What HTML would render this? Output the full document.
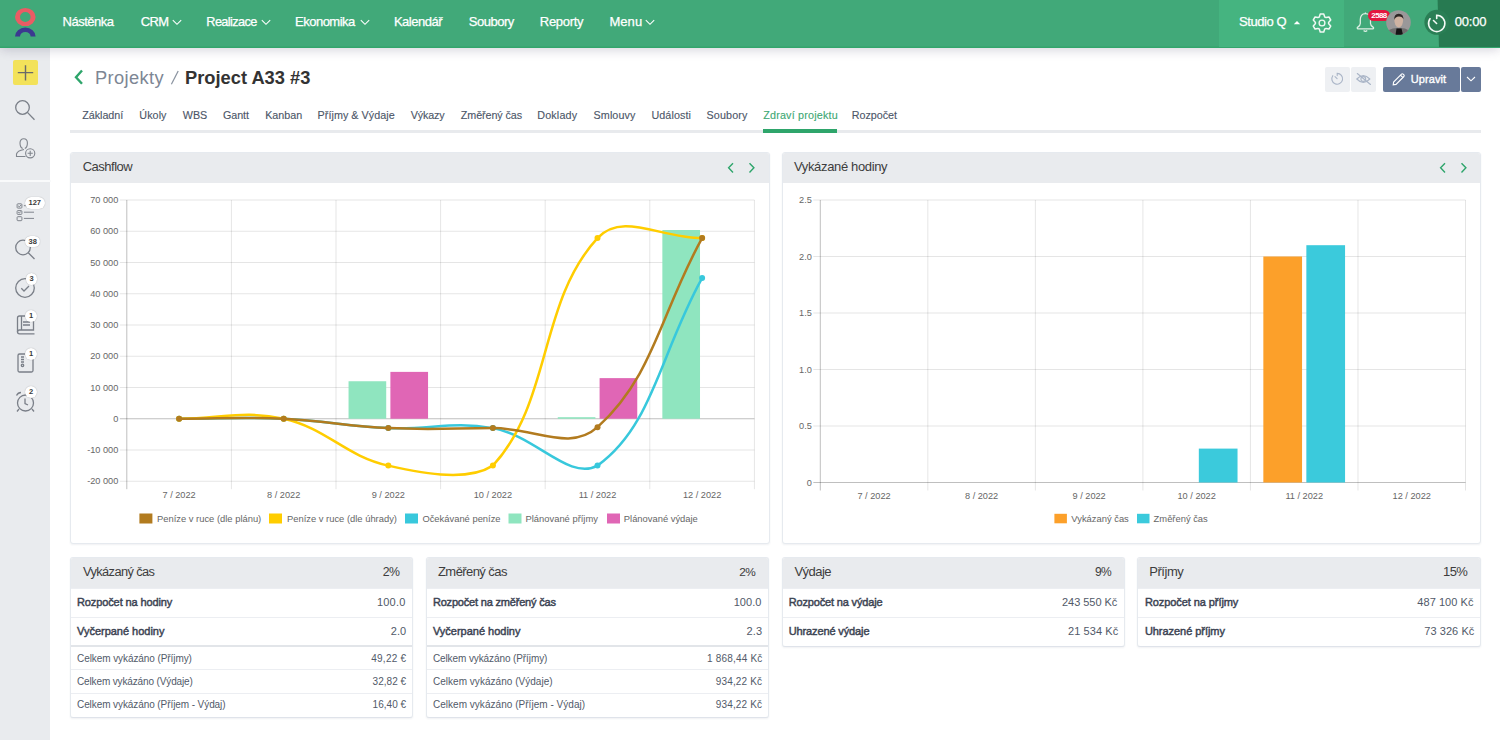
<!DOCTYPE html>
<html><head><meta charset="utf-8">
<style>
*{box-sizing:border-box;margin:0;padding:0}
html,body{width:1500px;height:740px;overflow:hidden;background:#fff;font-family:"Liberation Sans",sans-serif;position:relative}
.abs{position:absolute;white-space:nowrap}
.tx{position:absolute;white-space:nowrap;z-index:10}
#top{position:absolute;left:0;top:0;width:1500px;height:47.6px;background:#41a979;box-shadow:inset 0 -1.5px 0 rgba(30,160,90,0.4),0 2px 10px rgba(70,60,100,0.22);z-index:5}
.nav{position:absolute;top:14px;color:#fff;font-size:13px;line-height:16px;white-space:nowrap}
.chev{position:absolute;top:19px}
#side{position:absolute;left:0;top:47px;width:50.2px;height:693px;background:#e9ebee}
.sico{position:absolute}
.badge{position:absolute;background:#fff;border-radius:7px;font-size:7.5px;font-weight:bold;line-height:11px;height:11.5px;color:#3a3a3a;text-align:center;box-shadow:0 0 1px rgba(0,0,0,0.35)}
.crumb{position:absolute;top:66px;font-size:19px;line-height:24px;white-space:nowrap}
.tab{position:absolute;top:107px;font-size:11px;line-height:14px;color:#4c5668;white-space:nowrap}
.card{position:absolute;border:1px solid #e6eaef;border-radius:3px;background:#fff;overflow:hidden;box-shadow:0 1px 2px rgba(40,50,80,0.07)}
.chd{position:absolute;left:0;top:0;right:0;height:30px;background:#e9ebee}
.chd span{position:absolute;top:8px;font-size:13px;line-height:16px;color:#3d3d3d;white-space:nowrap}
svg text.ax{font-family:"Liberation Sans",sans-serif;font-size:9.2px;fill:#666}
svg text.lg{font-family:"Liberation Sans",sans-serif;font-size:9.4px;fill:#666}
.tbl{position:absolute;border:1px solid #e6eaef;border-bottom-color:#dfe3ea;border-radius:3px;background:#fff;overflow:hidden;box-shadow:0 1px 2px rgba(40,50,80,0.07)}
.tbl .hd{position:absolute;left:0;right:0;top:0;height:30px;background:#e9ebee}
.tbl .hd .l{position:absolute;left:12px;top:8px;font-size:13px;line-height:16px;color:#3d3d3d;white-space:nowrap}
.tbl .hd .r{position:absolute;right:12px;top:8px;font-size:13px;line-height:16px;color:#3d3d3d;white-space:nowrap}
.row{position:absolute;left:0;right:0;border-top:1px solid #eceef2}
.row .l{position:absolute;left:6px;white-space:nowrap}
.row .r{position:absolute;right:6px;white-space:nowrap}
.big .l{font-weight:bold;font-size:11px;color:#3b4352;top:7px;line-height:14px}
.big .r{font-size:11px;color:#555c68;top:7px;line-height:14px}
.sm .l,.sm .r{font-size:10px;color:#5b6270;top:5px;line-height:13px}
</style></head><body>

<div id="top">
  <svg class="abs" style="left:0;top:0" width="60" height="47" viewBox="0 0 60 47">
    <path fill="#ea5c64" fill-rule="evenodd" d="M15 17 a10.3 9.1 0 1 0 20.6 0 a10.3 9.1 0 1 0 -20.6 0 Z M20 17 a5.3 4.9 0 1 0 10.6 0 a5.3 4.9 0 1 0 -10.6 0 Z"/>
    <path fill="#3b3990" d="M15 36.5 A10.3 8.9 0 0 1 35.6 36.5 L30.6 36.5 A5.3 4.5 0 0 0 20 36.5 Z"/>
  </svg>
  <svg class="chev" style="left:172px" width="10" height="7" viewBox="0 0 10 7"><path d="M0.8 1.2 L5 5.3 L9.2 1.2" fill="none" stroke="#fff" stroke-width="1.1"/></svg>
  <svg class="chev" style="left:261px" width="10" height="7" viewBox="0 0 10 7"><path d="M0.8 1.2 L5 5.3 L9.2 1.2" fill="none" stroke="#fff" stroke-width="1.1"/></svg>
  <svg class="chev" style="left:360px" width="10" height="7" viewBox="0 0 10 7"><path d="M0.8 1.2 L5 5.3 L9.2 1.2" fill="none" stroke="#fff" stroke-width="1.1"/></svg>
  <svg class="chev" style="left:645px" width="10" height="7" viewBox="0 0 10 7"><path d="M0.8 1.2 L5 5.3 L9.2 1.2" fill="none" stroke="#fff" stroke-width="1.1"/></svg>

  <div class="abs" style="left:1219px;top:0;width:125px;height:47px;background:#45b480"></div>
  <svg class="abs" style="left:1293px;top:20px" width="8" height="5" viewBox="0 0 8 5"><path d="M0.8 4.2 L4 1 L7.2 4.2 Z" fill="#fff"/></svg>
  <svg class="abs" style="left:1310px;top:10.5px" width="24" height="24" viewBox="0 0 24 24"><path fill="none" stroke="#f0f8f3" stroke-width="1.5" stroke-linejoin="round" d="M9.34 5.74 L10.24 2.97 L13.76 2.97 L14.66 5.74 L15.25 6.37 L16.09 6.57 L18.94 5.96 L20.70 9.00 L18.75 11.17 L18.50 12.00 L18.75 12.83 L20.70 15.00 L18.94 18.04 L16.09 17.43 L15.25 17.63 L14.66 18.26 L13.76 21.03 L10.24 21.03 L9.34 18.26 L8.75 17.63 L7.91 17.43 L5.06 18.04 L3.30 15.00 L5.25 12.83 L5.50 12.00 L5.25 11.17 L3.30 9.00 L5.06 5.96 L7.91 6.57 L8.75 6.37 Z"/><circle cx="12" cy="12" r="2.9" fill="none" stroke="#f0f8f3" stroke-width="1.35"/></svg>

  <svg class="abs" style="left:1355px;top:10.5px" width="21" height="24" viewBox="0 0 21 24"><path d="M10.4 2.6 C6.9 2.6 5.3 5.2 5.3 8.6 L5.3 12.6 C5.3 14.1 4.4 15.1 2.8 16.1 Q1.9 16.7 2.3 17.3 Q2.7 17.9 3.7 17.9 L17.1 17.9 Q18.1 17.9 18.5 17.3 Q18.9 16.7 18 16.1 C16.4 15.1 15.5 14.1 15.5 12.6 L15.5 8.6 C15.5 5.2 13.9 2.6 10.4 2.6 Z M10.4 1.6 L10.4 2.6" fill="none" stroke="#dff0e6" stroke-width="1.25" stroke-linejoin="round"/><path d="M8.6 19.5 Q10.4 21.4 12.2 19.5" fill="none" stroke="#dff0e6" stroke-width="1.25"/></svg>
  <div class="abs" style="left:1368px;top:9.5px;width:22px;height:11.5px;border-radius:6px;background:#e3173f;color:#fff;font-size:8px;font-weight:bold;line-height:11.5px;text-align:center;letter-spacing:-0.6px">2588</div>
  <svg class="abs" style="left:1386px;top:10px" width="25" height="25" viewBox="0 0 25 25">
    <defs><clipPath id="av"><circle cx="12.5" cy="12.5" r="12.3"/></clipPath></defs>
    <g clip-path="url(#av)">
      <rect width="25" height="25" fill="#9a9899"/>
      <path d="M1 25 L3 20 Q7 17.5 13 18 Q19 17.5 22 20 L25 25 Z" fill="#6e6e6e"/>
      <path d="M9.5 25 L10.5 18.5 L15.5 18.5 L17 25 Z" fill="#141414"/>
      <path d="M8.3 9 Q8.2 16.5 12.8 17.6 Q17.2 16.5 17.2 9 Q16.5 5.5 12.8 5.5 Q9 5.5 8.3 9 Z" fill="#cfb3a2"/>
      <path d="M8.3 10 Q7.6 4.3 12.8 3.8 Q17.8 4.1 17.4 9.6 Q16.6 6.3 12.8 6.4 Q9.3 6.5 8.3 10 Z" fill="#2e2624"/>
      
    </g>
  </svg>
  <svg class="abs" style="left:1420px;top:0" width="80" height="47" viewBox="0 0 80 47">
    <path d="M17.6 0 L80 0 L80 47 L19 47 Z" fill="#277a51"/>
    <circle cx="16.9" cy="22.3" r="12.5" fill="#2a7e55"/>
    <path d="M16.7 18.4 L16.7 15.25 A8.15 8.15 0 1 1 10.02 18.73" fill="none" stroke="#f4faf6" stroke-width="1.6" stroke-linecap="round"/>
    <path d="M13.5 20.5 L16.6 23.5" stroke="#f4faf6" stroke-width="1.6" stroke-linecap="round"/>
  </svg>
</div>

<div id="side">
  <div class="abs" style="left:13px;top:13px;width:25px;height:25px;background:#f3e25a;border-radius:2px"></div>
  <svg class="abs" style="left:13px;top:13px" width="25" height="25" viewBox="0 0 25 25"><path d="M4.8 12.6 H20.2 M12.5 5.2 V20.6" stroke="#6a6a6a" stroke-width="1.4"/></svg>
  <svg class="sico" style="left:14px;top:51px" width="24" height="24" viewBox="0 0 24 24"><circle cx="8.5" cy="9.5" r="6.8" fill="none" stroke="#7a7f88" stroke-width="1.3"/><path d="M13.4 14.4 L20.5 21.7" stroke="#7a7f88" stroke-width="1.3"/></svg>
  <svg class="sico" style="left:15px;top:90px" width="22" height="22" viewBox="0 0 22 22"><path d="M9 12.5 C6.2 13 2.2 14.6 1.5 17 L1.5 19.5 L10.5 19.5 M7.7 11.6 C5.5 10.6 5 8.3 5 6 C5 3 6.5 1.8 8.7 1.8 C10.9 1.8 12.4 3 12.4 6 C12.4 8.3 11.9 10.6 9.8 11.6" fill="none" stroke="#80858d" stroke-width="1.1"/><circle cx="15.2" cy="16.3" r="4.6" fill="#e9ebee" stroke="#80858d" stroke-width="1.1"/><path d="M12.6 16.3 H17.8 M15.2 13.7 V18.9" stroke="#80858d" stroke-width="1.1"/></svg>
  <div class="abs" style="left:0;top:133px;width:50.5px;height:1.5px;background:#f9fafb"></div>

  <svg class="sico" style="left:15px;top:153px" width="22" height="22" viewBox="0 0 22 22"><g fill="none" stroke="#80858d" stroke-width="1"><rect x="2.1" y="3.8" width="4.8" height="4.3" rx="0.8"/><rect x="2.1" y="10.6" width="4.8" height="3.8" rx="0.8"/><rect x="2.1" y="16.7" width="4.8" height="4" rx="0.8"/><path d="M3.2 12.2 L4.3 13.1 L6 11.3 M3.1 5.8 L4.3 6.9 L6.2 4.8"/><path d="M8.9 5.7 H19 M8.9 12.2 H19 M8.9 18.4 H19"/></g></svg>
  <div class="badge" style="left:25px;top:150.3px;width:19.6px">127</div>
  <svg class="sico" style="left:14px;top:191px" width="24" height="24" viewBox="0 0 24 24"><circle cx="9" cy="9.5" r="7.3" fill="none" stroke="#7a7f88" stroke-width="1.3"/><path d="M14.3 14.8 L20.5 21" stroke="#7a7f88" stroke-width="1.3"/></svg>
  <div class="badge" style="left:25px;top:188.5px;width:15.3px">38</div>
  <svg class="sico" style="left:14px;top:228px" width="24" height="24" viewBox="0 0 24 24"><circle cx="11" cy="13" r="9.3" fill="none" stroke="#7a7f88" stroke-width="1.3"/><path d="M7.3 13.3 L10 16 L15 11" fill="none" stroke="#7a7f88" stroke-width="1.3"/></svg>
  <div class="badge" style="left:25.8px;top:226.3px;width:11.6px">3</div>
  <svg class="sico" style="left:15px;top:267px" width="22" height="22" viewBox="0 0 22 22"><g fill="none" stroke="#7a7f88" stroke-width="1.3"><path d="M2.5 4 Q2.5 2 4.5 2 L18.5 2 L18.5 16 L4.5 16 Q2.5 16 2.5 18 Q2.5 19.8 4.5 19.8 L19.5 19.8"/><path d="M2.5 4 L2.5 18"/><path d="M8 8 H15 M8 11 H15"/><path d="M6.5 2 V16"/></g></svg>
  <div class="badge" style="left:25px;top:263px;width:12px;border-radius:6px;height:12px;line-height:12px">1</div>
  <svg class="sico" style="left:15px;top:305px" width="22" height="22" viewBox="0 0 22 22"><g fill="none" stroke="#7a7f88" stroke-width="1.3"><rect x="3" y="2" width="15" height="18" rx="1.5"/><path d="M6 5 H9 M6 7.5 H9 M6 10 H9"/><circle cx="7.5" cy="13.3" r="1.2"/></g></svg>
  <div class="badge" style="left:25px;top:301px;width:12px;border-radius:6px;height:12px;line-height:12px">1</div>
  <svg class="sico" style="left:14px;top:343px" width="24" height="24" viewBox="0 0 24 24"><g fill="none" stroke="#7a7f88" stroke-width="1.3"><circle cx="11.5" cy="13" r="8"/><path d="M11 8.5 V13.5 L14 15"/><path d="M2.5 5.5 Q4 2.5 7 2.5"/><path d="M5 19 L3 21.5 M18 19 L20 21.5"/></g></svg>
  <div class="badge" style="left:25px;top:339px;width:12px;border-radius:6px;height:12px;line-height:12px">2</div>
</div>

<!-- header -->
<svg class="abs" style="left:165px;top:65px" width="20" height="25" viewBox="0 0 20 25"><path d="M6.4 19.2 L13.2 6" stroke="#8a93a0" stroke-width="1.25"/></svg>
<svg class="abs" style="left:72px;top:68px" width="14" height="18" viewBox="0 0 14 18"><path d="M10 2.5 L4 9.2 L10 15.8" fill="none" stroke="#2ea56b" stroke-width="2.4"/></svg>

<div class="abs" style="left:1325px;top:67px;width:25px;height:25px;background:#eef0f3;border-radius:2px"></div>
<div class="abs" style="left:1351px;top:67px;width:25px;height:25px;background:#eef0f3;border-radius:2px"></div>
<svg class="abs" style="left:1325px;top:67px" width="25" height="25" viewBox="0 0 25 25"><path d="M12.20 8.60 L12.20 6.40 A5.40 5.40 0 1 1 7.78 8.70" fill="none" stroke="#aab5c7" stroke-width="1.1" stroke-linecap="round"/><path d="M10 9.7 L12.1 11.7" stroke="#aab5c7" stroke-width="1.1" stroke-linecap="round"/></svg>
<svg class="abs" style="left:1351px;top:67px" width="25" height="25" viewBox="0 0 25 25"><g fill="none" stroke="#aab5c7" stroke-width="1.1" stroke-linecap="round"><path d="M5.8 12 Q12.3 5.2 18.8 12 Q12.3 18.8 5.8 12 Z"/><circle cx="12.3" cy="12" r="2.4"/><path d="M6.3 6.5 L19.5 17.5"/></g></svg>

<div class="abs" style="left:1382.5px;top:67px;width:77px;height:25px;background:#687a9a;border-radius:2px"></div>
<svg class="abs" style="left:1391px;top:72px" width="15" height="15" viewBox="0 0 15 15"><path d="M2.2 12.8 L2.6 10 L10.5 2.1 Q11.3 1.4 12.1 2.1 L12.9 2.9 Q13.6 3.7 12.9 4.5 L5 12.4 Z M9.5 3.2 L11.8 5.5" fill="none" stroke="#fff" stroke-width="1.1"/></svg>
<div class="abs" style="left:1461px;top:67px;width:20px;height:25px;background:#687a9a;border-radius:2px"></div>
<svg class="abs" style="left:1466px;top:76px" width="10" height="6" viewBox="0 0 10 6"><path d="M1 1 L5 4.8 L9 1" fill="none" stroke="#fff" stroke-width="1.1"/></svg>

<!-- tabs -->
<div class="abs" style="left:70px;top:130px;width:1411px;height:3px;background:#e8eaed"></div>
<div class="abs" style="left:763px;top:129px;width:74px;height:3.5px;background:#2ea56b"></div>

<!-- cards -->
<div class="card" style="left:69.5px;top:152px;width:700px;height:392px">
  <div class="chd">
  <svg class="abs" style="left:654px;top:9px" width="36" height="12" viewBox="0 0 36 12"><path d="M8 1.2 L3.6 5.8 L8 10.4 M24.5 1.2 L28.9 5.8 L24.5 10.4" fill="none" stroke="#2ea56b" stroke-width="1.4"/></svg>
  </div>
</div>
<div class="card" style="left:782px;top:152px;width:699px;height:392px">
  <div class="chd">
  <svg class="abs" style="left:654px;top:9px" width="36" height="12" viewBox="0 0 36 12"><path d="M8 1.2 L3.6 5.8 L8 10.4 M24.5 1.2 L28.9 5.8 L24.5 10.4" fill="none" stroke="#2ea56b" stroke-width="1.4"/></svg>
  </div>
</div>
<svg class="abs" style="left:0;top:0;z-index:2" width="1500" height="740" viewBox="0 0 1500 740" shape-rendering="auto">
<line x1="119.8" y1="200.00" x2="754.4" y2="200.00" stroke="rgba(0,0,0,0.1)" stroke-width="1"/>
<text x="118.3" y="203.20" text-anchor="end" class="ax">70 000</text>
<line x1="119.8" y1="231.25" x2="754.4" y2="231.25" stroke="rgba(0,0,0,0.1)" stroke-width="1"/>
<text x="118.3" y="234.45" text-anchor="end" class="ax">60 000</text>
<line x1="119.8" y1="262.50" x2="754.4" y2="262.50" stroke="rgba(0,0,0,0.1)" stroke-width="1"/>
<text x="118.3" y="265.70" text-anchor="end" class="ax">50 000</text>
<line x1="119.8" y1="293.75" x2="754.4" y2="293.75" stroke="rgba(0,0,0,0.1)" stroke-width="1"/>
<text x="118.3" y="296.95" text-anchor="end" class="ax">40 000</text>
<line x1="119.8" y1="325.00" x2="754.4" y2="325.00" stroke="rgba(0,0,0,0.1)" stroke-width="1"/>
<text x="118.3" y="328.20" text-anchor="end" class="ax">30 000</text>
<line x1="119.8" y1="356.25" x2="754.4" y2="356.25" stroke="rgba(0,0,0,0.1)" stroke-width="1"/>
<text x="118.3" y="359.45" text-anchor="end" class="ax">20 000</text>
<line x1="119.8" y1="387.50" x2="754.4" y2="387.50" stroke="rgba(0,0,0,0.1)" stroke-width="1"/>
<text x="118.3" y="390.70" text-anchor="end" class="ax">10 000</text>
<line x1="119.8" y1="418.75" x2="754.4" y2="418.75" stroke="rgba(0,0,0,0.25)" stroke-width="1"/>
<text x="118.3" y="421.95" text-anchor="end" class="ax">0</text>
<line x1="119.8" y1="450.00" x2="754.4" y2="450.00" stroke="rgba(0,0,0,0.1)" stroke-width="1"/>
<text x="118.3" y="453.20" text-anchor="end" class="ax">-10 000</text>
<line x1="119.8" y1="481.25" x2="754.4" y2="481.25" stroke="rgba(0,0,0,0.1)" stroke-width="1"/>
<text x="118.3" y="484.45" text-anchor="end" class="ax">-20 000</text>
<line x1="126.80" y1="200.0" x2="126.80" y2="489.2" stroke="rgba(0,0,0,0.25)" stroke-width="1"/>
<line x1="231.40" y1="200.0" x2="231.40" y2="489.2" stroke="rgba(0,0,0,0.1)" stroke-width="1"/>
<line x1="336.00" y1="200.0" x2="336.00" y2="489.2" stroke="rgba(0,0,0,0.1)" stroke-width="1"/>
<line x1="440.60" y1="200.0" x2="440.60" y2="489.2" stroke="rgba(0,0,0,0.1)" stroke-width="1"/>
<line x1="545.20" y1="200.0" x2="545.20" y2="489.2" stroke="rgba(0,0,0,0.1)" stroke-width="1"/>
<line x1="649.80" y1="200.0" x2="649.80" y2="489.2" stroke="rgba(0,0,0,0.1)" stroke-width="1"/>
<line x1="754.40" y1="200.0" x2="754.40" y2="489.2" stroke="rgba(0,0,0,0.1)" stroke-width="1"/>
<text x="179.10" y="498.3" text-anchor="middle" class="ax">7 / 2022</text>
<text x="283.70" y="498.3" text-anchor="middle" class="ax">8 / 2022</text>
<text x="388.30" y="498.3" text-anchor="middle" class="ax">9 / 2022</text>
<text x="492.90" y="498.3" text-anchor="middle" class="ax">10 / 2022</text>
<text x="597.50" y="498.3" text-anchor="middle" class="ax">11 / 2022</text>
<text x="702.10" y="498.3" text-anchor="middle" class="ax">12 / 2022</text>
<rect x="348.55" y="381.25" width="37.66" height="37.50" fill="#8fe5bf"/>
<rect x="390.39" y="371.88" width="37.66" height="46.88" fill="#e066b5"/>
<rect x="557.75" y="417.19" width="37.66" height="1.56" fill="#8fe5bf"/>
<rect x="599.59" y="378.12" width="37.66" height="40.62" fill="#e066b5"/>
<rect x="662.35" y="230.00" width="37.66" height="188.75" fill="#8fe5bf"/>
<path d="M179.10 418.75 C220.94 418.75 241.94 416.88 283.70 418.75 C325.62 420.63 346.38 426.25 388.30 428.12 C430.06 430.00 452.32 420.85 492.90 428.12 C536.00 435.85 568.96 481.25 597.50 465.62 C652.64 426.09 660.26 353.12 702.10 278.12" fill="none" stroke="#38c8dc" stroke-width="2.5"/>
<circle cx="179.10" cy="418.75" r="3" fill="#38c8dc"/>
<circle cx="283.70" cy="418.75" r="3" fill="#38c8dc"/>
<circle cx="388.30" cy="428.12" r="3" fill="#38c8dc"/>
<circle cx="492.90" cy="428.12" r="3" fill="#38c8dc"/>
<circle cx="597.50" cy="465.62" r="3" fill="#38c8dc"/>
<circle cx="702.10" cy="278.12" r="3" fill="#38c8dc"/>
<path d="M179.10 418.75 C220.94 418.75 243.77 409.80 283.70 418.75 C327.45 428.55 344.55 455.82 388.30 465.62 C428.23 474.57 468.24 481.25 492.90 465.62 C551.92 401.44 538.48 302.31 597.50 238.12 C622.16 211.31 660.26 238.12 702.10 238.12" fill="none" stroke="#ffcd00" stroke-width="2.5"/>
<circle cx="179.10" cy="418.75" r="3" fill="#ffcd00"/>
<circle cx="283.70" cy="418.75" r="3" fill="#ffcd00"/>
<circle cx="388.30" cy="465.62" r="3" fill="#ffcd00"/>
<circle cx="492.90" cy="465.62" r="3" fill="#ffcd00"/>
<circle cx="597.50" cy="238.12" r="3" fill="#ffcd00"/>
<circle cx="702.10" cy="238.12" r="3" fill="#ffcd00"/>
<path d="M179.10 418.75 C220.94 418.75 241.94 416.88 283.70 418.75 C325.62 420.63 346.38 426.25 388.30 428.12 C430.06 430.00 451.06 428.31 492.90 428.12 C534.74 427.94 570.20 451.98 597.50 427.19 C653.88 375.98 660.26 313.75 702.10 238.12" fill="none" stroke="#b27b1f" stroke-width="2.5"/>
<circle cx="179.10" cy="418.75" r="3" fill="#b27b1f"/>
<circle cx="283.70" cy="418.75" r="3" fill="#b27b1f"/>
<circle cx="388.30" cy="428.12" r="3" fill="#b27b1f"/>
<circle cx="492.90" cy="428.12" r="3" fill="#b27b1f"/>
<circle cx="597.50" cy="427.19" r="3" fill="#b27b1f"/>
<circle cx="702.10" cy="238.12" r="3" fill="#b27b1f"/>
<rect x="139.4" y="513.5" width="13" height="10" fill="#b27b1f"/>
<text x="157.0" y="521.6" class="lg">Peníze v ruce (dle plánu)</text>
<rect x="269.0" y="513.5" width="13" height="10" fill="#ffcd00"/>
<text x="287.0" y="521.6" class="lg">Peníze v ruce (dle úhrady)</text>
<rect x="405.0" y="513.5" width="13" height="10" fill="#38c8dc"/>
<text x="422.4" y="521.6" class="lg">Očekávané peníze</text>
<rect x="508.5" y="513.5" width="13" height="10" fill="#8fe5bf"/>
<text x="525.5" y="521.6" class="lg">Plánované příjmy</text>
<rect x="607.0" y="513.5" width="13" height="10" fill="#e066b5"/>
<text x="623.8" y="521.6" class="lg">Plánované výdaje</text>
<line x1="813.3" y1="200.00" x2="1465.5" y2="200.00" stroke="rgba(0,0,0,0.1)" stroke-width="1"/>
<text x="811.8" y="203.20" text-anchor="end" class="ax">2.5</text>
<line x1="813.3" y1="256.50" x2="1465.5" y2="256.50" stroke="rgba(0,0,0,0.1)" stroke-width="1"/>
<text x="811.8" y="259.70" text-anchor="end" class="ax">2.0</text>
<line x1="813.3" y1="313.00" x2="1465.5" y2="313.00" stroke="rgba(0,0,0,0.1)" stroke-width="1"/>
<text x="811.8" y="316.20" text-anchor="end" class="ax">1.5</text>
<line x1="813.3" y1="369.50" x2="1465.5" y2="369.50" stroke="rgba(0,0,0,0.1)" stroke-width="1"/>
<text x="811.8" y="372.70" text-anchor="end" class="ax">1.0</text>
<line x1="813.3" y1="426.00" x2="1465.5" y2="426.00" stroke="rgba(0,0,0,0.1)" stroke-width="1"/>
<text x="811.8" y="429.20" text-anchor="end" class="ax">0.5</text>
<line x1="813.3" y1="482.50" x2="1465.5" y2="482.50" stroke="rgba(0,0,0,0.25)" stroke-width="1"/>
<text x="811.8" y="485.70" text-anchor="end" class="ax">0</text>
<line x1="820.30" y1="200.0" x2="820.30" y2="490.5" stroke="rgba(0,0,0,0.25)" stroke-width="1"/>
<line x1="927.83" y1="200.0" x2="927.83" y2="490.5" stroke="rgba(0,0,0,0.1)" stroke-width="1"/>
<line x1="1035.37" y1="200.0" x2="1035.37" y2="490.5" stroke="rgba(0,0,0,0.1)" stroke-width="1"/>
<line x1="1142.90" y1="200.0" x2="1142.90" y2="490.5" stroke="rgba(0,0,0,0.1)" stroke-width="1"/>
<line x1="1250.43" y1="200.0" x2="1250.43" y2="490.5" stroke="rgba(0,0,0,0.1)" stroke-width="1"/>
<line x1="1357.97" y1="200.0" x2="1357.97" y2="490.5" stroke="rgba(0,0,0,0.1)" stroke-width="1"/>
<line x1="1465.50" y1="200.0" x2="1465.50" y2="490.5" stroke="rgba(0,0,0,0.1)" stroke-width="1"/>
<text x="874.07" y="498.7" text-anchor="middle" class="ax">7 / 2022</text>
<text x="981.60" y="498.7" text-anchor="middle" class="ax">8 / 2022</text>
<text x="1089.13" y="498.7" text-anchor="middle" class="ax">9 / 2022</text>
<text x="1196.67" y="498.7" text-anchor="middle" class="ax">10 / 2022</text>
<text x="1304.20" y="498.7" text-anchor="middle" class="ax">11 / 2022</text>
<text x="1411.73" y="498.7" text-anchor="middle" class="ax">12 / 2022</text>
<rect x="1198.82" y="448.60" width="38.71" height="33.90" fill="#3bcadc"/>
<rect x="1263.34" y="256.50" width="38.71" height="226.00" fill="#fca02a"/>
<rect x="1306.35" y="245.20" width="38.71" height="237.30" fill="#3bcadc"/>
<rect x="1054.4" y="513.8" width="12.5" height="9.5" fill="#fca02a"/>
<text x="1071.3" y="521.6" class="lg">Vykázaný čas</text>
<rect x="1137.0" y="513.8" width="12.5" height="9.5" fill="#3bcadc"/>
<text x="1153.6" y="521.6" class="lg">Změřený čas</text>
</svg>

<!-- tables -->
<div class="tbl" style="left:69.5px;top:557px;width:343.5px;height:160.5px">
  <div class="hd"></div>
  <div class="row big" style="top:30px;height:29px"></div>
  <div class="row big" style="top:58.5px;height:29px"></div>
  <div class="row sm" style="top:87px;height:24px;border-top:2px solid #e2e5e9"></div>
  <div class="row sm" style="top:111px;height:23.5px"></div>
  <div class="row sm" style="top:134.5px;height:26px"></div>
</div>
<div class="tbl" style="left:425.8px;top:557px;width:343px;height:160.5px">
  <div class="hd"></div>
  <div class="row big" style="top:30px;height:29px"></div>
  <div class="row big" style="top:58.5px;height:29px"></div>
  <div class="row sm" style="top:87px;height:24px;border-top:2px solid #e2e5e9"></div>
  <div class="row sm" style="top:111px;height:23.5px"></div>
  <div class="row sm" style="top:134.5px;height:26px"></div>
</div>
<div class="tbl" style="left:782.3px;top:557px;width:342.5px;height:89.5px">
  <div class="hd"></div>
  <div class="row big" style="top:30px;height:29px"></div>
  <div class="row big" style="top:58.5px;height:29px"></div>
</div>
<div class="tbl" style="left:1137.2px;top:557px;width:343.8px;height:89.5px">
  <div class="hd"></div>
  <div class="row big" style="top:30px;height:29px"></div>
  <div class="row big" style="top:58.5px;height:29px"></div>
</div>

<div class="tx" style="left:62.60px;top:15px;font-size:13px;line-height:13px;font-weight:normal;color:#fff;letter-spacing:-0.500px;-webkit-text-stroke:0.25px #fff">Nástěnka</div>
<div class="tx" style="left:140.70px;top:16px;font-size:12.96px;line-height:12.96px;font-weight:normal;color:#fff;letter-spacing:-0.600px;-webkit-text-stroke:0.25px #fff">CRM</div>
<div class="tx" style="left:206.32px;top:16px;font-size:12.7px;line-height:12.7px;font-weight:normal;color:#fff;letter-spacing:-0.600px;-webkit-text-stroke:0.25px #fff">Realizace</div>
<div class="tx" style="left:295.00px;top:15px;font-size:13px;line-height:13px;font-weight:normal;color:#fff;letter-spacing:-0.500px;-webkit-text-stroke:0.25px #fff">Ekonomika</div>
<div class="tx" style="left:393.90px;top:15px;font-size:13px;line-height:13px;font-weight:normal;color:#fff;letter-spacing:-0.486px;-webkit-text-stroke:0.25px #fff">Kalendář</div>
<div class="tx" style="left:468.80px;top:15px;font-size:13px;line-height:13px;font-weight:normal;color:#fff;letter-spacing:-0.483px;-webkit-text-stroke:0.25px #fff">Soubory</div>
<div class="tx" style="left:539.80px;top:15px;font-size:13px;line-height:13px;font-weight:normal;color:#fff;letter-spacing:-0.300px;-webkit-text-stroke:0.25px #fff">Reporty</div>
<div class="tx" style="left:609.40px;top:15px;font-size:13px;line-height:13px;font-weight:normal;color:#fff;letter-spacing:0.067px;-webkit-text-stroke:0.25px #fff">Menu</div>
<div class="tx" style="left:1239.00px;top:15px;font-size:13px;line-height:13px;font-weight:normal;color:#fff;letter-spacing:-0.429px;-webkit-text-stroke:0.25px #fff">Studio Q</div>
<div class="tx" style="left:1454.70px;top:15px;font-size:13px;line-height:13px;font-weight:normal;color:#fff;letter-spacing:-0.175px;-webkit-text-stroke:0.25px #fff">00:00</div>
<div class="tx" style="left:95.00px;top:69px;font-size:18.3px;line-height:18.3px;font-weight:normal;color:#7d8694;letter-spacing:0.357px">Projekty</div>
<div class="tx" style="left:185.00px;top:69px;font-size:18.3px;line-height:18.3px;font-weight:bold;color:#333333;letter-spacing:0.000px">Project A33 #3</div>
<div class="tx" style="left:82.20px;top:110px;font-size:10.75px;line-height:10.75px;font-weight:normal;color:#4c5668;letter-spacing:-0.029px;-webkit-text-stroke:0.12px #4c5668">Základní</div>
<div class="tx" style="left:139.30px;top:110px;font-size:10.75px;line-height:10.75px;font-weight:normal;color:#4c5668;letter-spacing:0.075px;-webkit-text-stroke:0.12px #4c5668">Úkoly</div>
<div class="tx" style="left:182.80px;top:110px;font-size:10.75px;line-height:10.75px;font-weight:normal;color:#4c5668;letter-spacing:0.000px;-webkit-text-stroke:0.12px #4c5668">WBS</div>
<div class="tx" style="left:223.00px;top:110px;font-size:10.75px;line-height:10.75px;font-weight:normal;color:#4c5668;letter-spacing:-0.100px;-webkit-text-stroke:0.12px #4c5668">Gantt</div>
<div class="tx" style="left:265.20px;top:110px;font-size:10.75px;line-height:10.75px;font-weight:normal;color:#4c5668;letter-spacing:0.000px;-webkit-text-stroke:0.12px #4c5668">Kanban</div>
<div class="tx" style="left:317.60px;top:110px;font-size:10.75px;line-height:10.75px;font-weight:normal;color:#4c5668;letter-spacing:0.043px;-webkit-text-stroke:0.12px #4c5668">Příjmy &amp; Výdaje</div>
<div class="tx" style="left:410.80px;top:110px;font-size:10.75px;line-height:10.75px;font-weight:normal;color:#4c5668;letter-spacing:-0.160px;-webkit-text-stroke:0.12px #4c5668">Výkazy</div>
<div class="tx" style="left:460.80px;top:110px;font-size:10.75px;line-height:10.75px;font-weight:normal;color:#4c5668;letter-spacing:-0.080px;-webkit-text-stroke:0.12px #4c5668">Změřený čas</div>
<div class="tx" style="left:537.20px;top:110px;font-size:10.75px;line-height:10.75px;font-weight:normal;color:#4c5668;letter-spacing:0.183px;-webkit-text-stroke:0.12px #4c5668">Doklady</div>
<div class="tx" style="left:593.60px;top:110px;font-size:10.75px;line-height:10.75px;font-weight:normal;color:#4c5668;letter-spacing:0.083px;-webkit-text-stroke:0.12px #4c5668">Smlouvy</div>
<div class="tx" style="left:651.40px;top:110px;font-size:10.75px;line-height:10.75px;font-weight:normal;color:#4c5668;letter-spacing:0.100px;-webkit-text-stroke:0.12px #4c5668">Události</div>
<div class="tx" style="left:706.50px;top:110px;font-size:10.75px;line-height:10.75px;font-weight:normal;color:#4c5668;letter-spacing:0.133px;-webkit-text-stroke:0.12px #4c5668">Soubory</div>
<div class="tx" style="left:851.80px;top:110px;font-size:10.75px;line-height:10.75px;font-weight:normal;color:#4c5668;letter-spacing:-0.043px;-webkit-text-stroke:0.12px #4c5668">Rozpočet</div>
<div class="tx" style="left:763.20px;top:110px;font-size:10.75px;line-height:10.75px;font-weight:normal;color:#3ea874;letter-spacing:0.200px;-webkit-text-stroke:0.12px #3ea874">Zdraví projektu</div>
<div class="tx" style="left:1410.70px;top:74px;font-size:11px;line-height:11px;font-weight:normal;color:#ffffff;letter-spacing:0.100px;-webkit-text-stroke:0.35px #fff">Upravit</div>
<div class="tx" style="left:82.70px;top:160px;font-size:13px;line-height:13px;font-weight:normal;color:#3d3d3d;letter-spacing:-0.486px">Cashflow</div>
<div class="tx" style="left:794.00px;top:160px;font-size:13px;line-height:13px;font-weight:normal;color:#3d3d3d;letter-spacing:-0.357px">Vykázané hodiny</div>
<div class="tx" style="left:83.00px;top:566px;font-size:12.82px;line-height:12.82px;font-weight:normal;color:#3d3d3d;letter-spacing:-0.600px">Vykázaný čas</div>
<div class="tx" style="left:382.80px;top:566px;font-size:12.32px;line-height:12.32px;font-weight:normal;color:#3d3d3d;letter-spacing:-0.600px">2%</div>
<div class="tx" style="left:438.00px;top:565px;font-size:13px;line-height:13px;font-weight:normal;color:#3d3d3d;letter-spacing:-0.570px">Změřený čas</div>
<div class="tx" style="left:739.20px;top:567px;font-size:11.84px;line-height:11.84px;font-weight:normal;color:#3d3d3d;letter-spacing:-0.600px">2%</div>
<div class="tx" style="left:794.40px;top:565px;font-size:13px;line-height:13px;font-weight:normal;color:#3d3d3d;letter-spacing:-0.515px">Výdaje</div>
<div class="tx" style="left:1095.00px;top:566px;font-size:12.04px;line-height:12.04px;font-weight:normal;color:#3d3d3d;letter-spacing:-0.600px">9%</div>
<div class="tx" style="left:1149.30px;top:565px;font-size:13px;line-height:13px;font-weight:normal;color:#3d3d3d;letter-spacing:-0.463px">Příjmy</div>
<div class="tx" style="left:1443.00px;top:565px;font-size:13px;line-height:13px;font-weight:normal;color:#3d3d3d;letter-spacing:-0.550px">15%</div>
<div class="tx" style="left:77.00px;top:597px;font-size:11px;line-height:11px;font-weight:normal;color:#3b4352;letter-spacing:-0.112px;-webkit-text-stroke:0.45px #3b4352">Rozpočet na hodiny</div>
<div class="tx" style="left:77.00px;top:626px;font-size:11px;line-height:11px;font-weight:normal;color:#3b4352;letter-spacing:-0.013px;-webkit-text-stroke:0.45px #3b4352">Vyčerpané hodiny</div>
<div class="tx" style="left:432.90px;top:597px;font-size:11px;line-height:11px;font-weight:normal;color:#3b4352;letter-spacing:-0.186px;-webkit-text-stroke:0.45px #3b4352">Rozpočet na změřený čas</div>
<div class="tx" style="left:432.90px;top:626px;font-size:11px;line-height:11px;font-weight:normal;color:#3b4352;letter-spacing:-0.006px;-webkit-text-stroke:0.45px #3b4352">Vyčerpané hodiny</div>
<div class="tx" style="left:788.70px;top:597px;font-size:11px;line-height:11px;font-weight:normal;color:#3b4352;letter-spacing:-0.159px;-webkit-text-stroke:0.45px #3b4352">Rozpočet na výdaje</div>
<div class="tx" style="left:788.70px;top:626px;font-size:11px;line-height:11px;font-weight:normal;color:#3b4352;letter-spacing:-0.121px;-webkit-text-stroke:0.45px #3b4352">Uhrazené výdaje</div>
<div class="tx" style="left:1144.90px;top:597px;font-size:11px;line-height:11px;font-weight:normal;color:#3b4352;letter-spacing:-0.076px;-webkit-text-stroke:0.45px #3b4352">Rozpočet na příjmy</div>
<div class="tx" style="left:1144.90px;top:626px;font-size:11px;line-height:11px;font-weight:normal;color:#3b4352;letter-spacing:-0.043px;-webkit-text-stroke:0.45px #3b4352">Uhrazené příjmy</div>
<div class="tx" style="left:376.90px;top:597px;font-size:11px;line-height:11px;font-weight:normal;color:#515968;letter-spacing:0.225px">100.0</div>
<div class="tx" style="left:390.82px;top:626px;font-size:11px;line-height:11px;font-weight:normal;color:#515968;letter-spacing:-0.008px">2.0</div>
<div class="tx" style="left:733.70px;top:597px;font-size:11px;line-height:11px;font-weight:normal;color:#515968;letter-spacing:0.050px">100.0</div>
<div class="tx" style="left:746.60px;top:626px;font-size:11px;line-height:11px;font-weight:normal;color:#515968;letter-spacing:0.150px">2.3</div>
<div class="tx" style="left:1062.00px;top:597px;font-size:11px;line-height:11px;font-weight:normal;color:#515968;letter-spacing:-0.033px">243 550 Kč</div>
<div class="tx" style="left:1068.00px;top:626px;font-size:11px;line-height:11px;font-weight:normal;color:#515968;letter-spacing:0.088px">21 534 Kč</div>
<div class="tx" style="left:1417.30px;top:597px;font-size:11px;line-height:11px;font-weight:normal;color:#515968;letter-spacing:0.056px">487 100 Kč</div>
<div class="tx" style="left:1424.20px;top:626px;font-size:11px;line-height:11px;font-weight:normal;color:#515968;letter-spacing:0.075px">73 326 Kč</div>
<div class="tx" style="left:77.00px;top:654px;font-size:10px;line-height:10px;font-weight:normal;color:#525a69;letter-spacing:-0.078px">Celkem vykázáno (Příjmy)</div>
<div class="tx" style="left:77.00px;top:677px;font-size:10px;line-height:10px;font-weight:normal;color:#525a69;letter-spacing:-0.135px">Celkem vykázáno (Výdaje)</div>
<div class="tx" style="left:77.00px;top:700px;font-size:10px;line-height:10px;font-weight:normal;color:#525a69;letter-spacing:-0.084px">Celkem vykázáno (Příjem - Výdaj)</div>
<div class="tx" style="left:371.20px;top:654px;font-size:10px;line-height:10px;font-weight:normal;color:#525a69;letter-spacing:0.267px">49,22 €</div>
<div class="tx" style="left:372.57px;top:677px;font-size:10px;line-height:10px;font-weight:normal;color:#525a69;letter-spacing:0.039px">32,82 €</div>
<div class="tx" style="left:372.58px;top:700px;font-size:10px;line-height:10px;font-weight:normal;color:#525a69;letter-spacing:0.037px">16,40 €</div>
<div class="tx" style="left:432.90px;top:654px;font-size:10px;line-height:10px;font-weight:normal;color:#525a69;letter-spacing:-0.096px">Celkem vykázáno (Příjmy)</div>
<div class="tx" style="left:432.90px;top:677px;font-size:10px;line-height:10px;font-weight:normal;color:#525a69;letter-spacing:0.036px">Celkem vykázáno (Výdaje)</div>
<div class="tx" style="left:432.90px;top:700px;font-size:10px;line-height:10px;font-weight:normal;color:#525a69;letter-spacing:0.034px">Celkem vykázáno (Příjem - Výdaj)</div>
<div class="tx" style="left:707.00px;top:654px;font-size:10px;line-height:10px;font-weight:normal;color:#525a69;letter-spacing:0.190px">1 868,44 Kč</div>
<div class="tx" style="left:715.80px;top:677px;font-size:10px;line-height:10px;font-weight:normal;color:#525a69;letter-spacing:0.138px">934,22 Kč</div>
<div class="tx" style="left:715.80px;top:700px;font-size:10px;line-height:10px;font-weight:normal;color:#525a69;letter-spacing:0.138px">934,22 Kč</div>
</body></html>
